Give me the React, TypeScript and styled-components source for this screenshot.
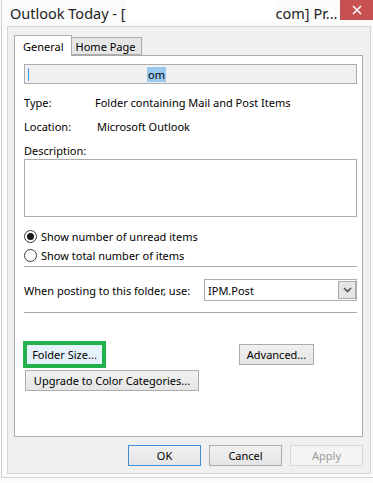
import styled, { createGlobalStyle } from "styled-components";

const GlobalStyle = createGlobalStyle`
  body {
    margin: 0;
    background: #fbfbfb;
    font-family: "Noto Sans", "Open Sans", sans-serif;
    font-size: 11px;
    color: #000;
  }
`;

function App() {
  return (
    <>
      <GlobalStyle />
      <Window>
        <TitleBar>
          <TitleText>Outlook Today - [</TitleText>
          <Redacted />
          <TitleText>com] Pr...</TitleText>
          <CloseButton>
            <svg width="10" height="10" viewBox="0 0 10 10">
              <path d="M1 1 L9 9 M9 1 L1 9" stroke="#fff" strokeWidth="1.6" />
            </svg>
          </CloseButton>
        </TitleBar>

        <Body>
          <Tabs>
            <Tab active>General</Tab>
            <Tab>Home Page</Tab>
          </Tabs>

          <Panel>
            <NameField>
              <Caret />
              <Selection>om</Selection>
            </NameField>

            <InfoRow top={6}>
              <Label width={71}>Type:</Label>
              <span>Folder containing Mail and Post Items</span>
            </InfoRow>
            <InfoRow top={0}>
              <Label width={73}>Location:</Label>
              <span>Microsoft Outlook</span>
            </InfoRow>

            <DescLabel>Description:</DescLabel>
            <DescBox />

            <RadioGroup>
              <RadioRow>
                <Radio checked />
                Show number of unread items
              </RadioRow>
              <RadioRow>
                <Radio />
                Show total number of items
              </RadioRow>
            </RadioGroup>

            <Separator gap={1} />

            <PostingRow>
              <Label width={180}>When posting to this folder, use:</Label>
              <Dropdown>
                <DropdownText>IPM.Post</DropdownText>
                <DropdownArrow>
                  <svg width="9" height="6" viewBox="0 0 9 6">
                    <path d="M1 1 L4.5 4.5 L8 1" stroke="#555" strokeWidth="1.6" fill="none" />
                  </svg>
                </DropdownArrow>
              </Dropdown>
            </PostingRow>

            <Separator gap={11} />

            <ActionRow>
              <Highlight>
                <Button width={75} height={19} focused>
                  Folder Size...
                </Button>
              </Highlight>
              <Spacer />
              <Button width={75} height={21}>
                Advanced...
              </Button>
            </ActionRow>
            <UpgradeRow>
              <Button width={174} height={21}>
                Upgrade to Color Categories...
              </Button>
            </UpgradeRow>
          </Panel>

          <Footer>
            <Button width={73} height={21} primary>
              OK
            </Button>
            <Button width={73} height={21}>
              Cancel
            </Button>
            <Button width={73} height={21} disabled>
              Apply
            </Button>
          </Footer>
        </Body>
      </Window>
    </>
  );
}

const Window = styled.div`
  box-sizing: border-box;
  margin-left: 1px;
  width: 372px;
  height: 478px;
  border-left: 1px solid #d2d2d2;
  border-bottom: 1px solid #d2d2d2;
  background: #fbfbfb;
  display: flex;
  flex-direction: column;
`;

const TitleBar = styled.div`
  height: 26px;
  flex: none;
  display: flex;
  align-items: flex-start;
  padding-left: 8px;
`;

const TitleText = styled.span`
  font-size: 14.5px;
  line-height: 26px;
  color: #222;
  white-space: pre;
`;

const Redacted = styled.div`
  width: 150px;
  height: 22px;
  background: #fff;
`;

const CloseButton = styled.div`
  margin-left: auto;
  width: 33px;
  height: 20px;
  background: #c75050;
  display: flex;
  align-items: center;
  justify-content: center;
`;

const Body = styled.div`
  flex: 1;
  margin: 0 2px 3px 5px;
  border: 1px solid #d4d4d4;
  background: #f0f0f0;
  padding: 8px 7px 0 6px;
  display: flex;
  flex-direction: column;
`;

const Tabs = styled.div`
  height: 20px;
  display: flex;
  align-items: flex-end;
`;

const Tab = styled.div<{ active?: boolean }>`
  box-sizing: border-box;
  position: relative;
  z-index: 1;
  height: ${(p) => (p.active ? "21px" : "18px")};
  margin-bottom: ${(p) => (p.active ? "-1px" : "0")};
  padding: ${(p) => (p.active ? "3px 7px 0 8px" : "1px 5px 0 4px")};
  border: 1px solid #acacac;
  border-bottom: ${(p) => (p.active ? "none" : "1px solid #acacac")};
  border-left: ${(p) => (p.active ? "1px solid #acacac" : "none")};
  background: ${(p) => (p.active ? "#fff" : "#e6e6e6")};
  line-height: 15px;
`;

const Panel = styled.div`
  box-sizing: border-box;
  height: 382px;
  border: 1px solid #acacac;
  background: #fff;
  padding: 8px 3px 0 9px;
  display: flex;
  flex-direction: column;
`;

const NameField = styled.div`
  box-sizing: border-box;
  height: 20px;
  width: 333px;
  border: 1px solid #acacac;
  background: #f0f0f0;
  display: flex;
  align-items: center;
  padding-left: 3px;
`;

const Caret = styled.div`
  width: 1px;
  height: 13px;
  background: #3399ff;
`;

const Selection = styled.span`
  margin-left: 118px;
  background: #99c9ef;
  padding: 0 1px;
  line-height: 15px;
`;

const InfoRow = styled.div<{ top: number }>`
  margin-top: ${(p) => p.top}px;
  height: 24px;
  display: flex;
  align-items: center;
`;

const Label = styled.span<{ width: number }>`
  width: ${(p) => p.width}px;
  flex: none;
`;

const DescLabel = styled.div`
  margin-top: 3px;
  height: 18px;
  display: flex;
  align-items: center;
`;

const DescBox = styled.div`
  box-sizing: border-box;
  width: 333px;
  height: 58px;
  border: 1px solid #acacac;
  background: #fff;
`;

const RadioGroup = styled.div`
  margin-top: 10px;
  display: flex;
  flex-direction: column;
`;

const RadioRow = styled.div`
  height: 19px;
  display: flex;
  align-items: center;
  gap: 4px;
`;

const Radio = styled.div<{ checked?: boolean }>`
  box-sizing: border-box;
  width: 13px;
  height: 13px;
  border-radius: 50%;
  border: 1px solid #3a3a3a;
  background: #fff;
  display: flex;
  align-items: center;
  justify-content: center;
  &::after {
    content: "";
    width: 7px;
    height: 7px;
    border-radius: 50%;
    background: ${(p) => (p.checked ? "#1a1a1a" : "transparent")};
  }
`;

const Separator = styled.div<{ gap: number }>`
  margin-top: ${(p) => p.gap}px;
  width: 333px;
  height: 1px;
  background: #a9a9a9;
`;

const PostingRow = styled.div`
  margin-top: 12px;
  height: 22px;
  display: flex;
  align-items: center;
`;

const Dropdown = styled.div`
  box-sizing: border-box;
  width: 153px;
  height: 22px;
  border: 1px solid #acacac;
  background: #fff;
  display: flex;
  align-items: center;
  padding: 1px 0 1px 3px;
`;

const DropdownText = styled.span`
  flex: 1;
`;

const DropdownArrow = styled.div`
  box-sizing: border-box;
  width: 18px;
  height: 18px;
  border: 1px solid #acacac;
  background: #e5e5e5;
  display: flex;
  align-items: center;
  justify-content: center;
`;

const ActionRow = styled.div`
  margin-top: 28px;
  display: flex;
  align-items: center;
`;

const Spacer = styled.div`
  width: 133px;
  flex: none;
`;

const Highlight = styled.div`
  margin-left: -1px;
  border: 4px solid #22b14c;
  display: flex;
`;

const UpgradeRow = styled.div`
  margin-top: 2px;
  margin-left: 1px;
  display: flex;
`;

const Button = styled.div<{
  width: number;
  height: number;
  primary?: boolean;
  focused?: boolean;
  disabled?: boolean;
}>`
  box-sizing: border-box;
  width: ${(p) => p.width}px;
  height: ${(p) => p.height}px;
  display: flex;
  align-items: center;
  justify-content: center;
  line-height: 15px;
  white-space: nowrap;
  border: ${(p) =>
    p.focused ? "none" : p.primary ? "1px solid #3c8fd8" : p.disabled ? "1px solid #d9d9d9" : "1px solid #acacac"};
  background: ${(p) =>
    p.focused
      ? "#e5f1fb"
      : p.disabled
      ? "#f4f4f4"
      : "linear-gradient(#f0f0f0, #e5e5e5)"};
  color: ${(p) => (p.disabled ? "#9b9b9b" : "#000")};
`;

const Footer = styled.div`
  margin-top: 8px;
  display: flex;
  justify-content: flex-end;
  gap: 8px;
`;

export default App;
